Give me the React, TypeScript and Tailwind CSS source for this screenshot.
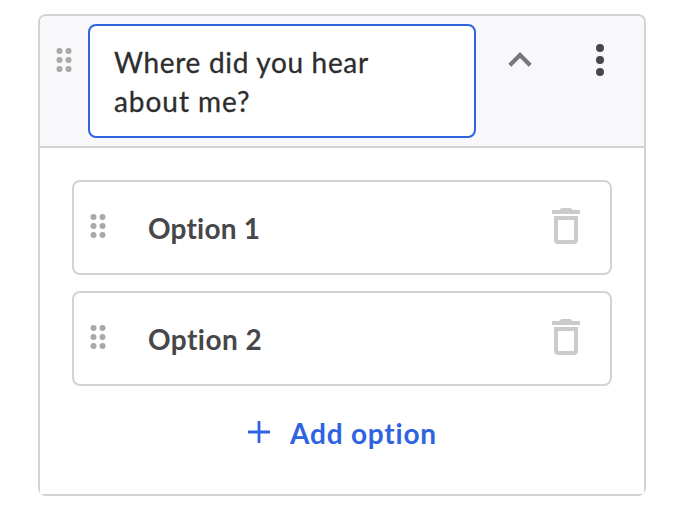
function DragHandle() {
  return (
    <svg width="16" height="24" viewBox="0 0 16 24" fill="#a9a9aa" className="block shrink-0">
      {[3, 12, 21].map((y) => (
        <g key={y}>
          <circle cx="3.5" cy={y} r="3" />
          <circle cx="12.5" cy={y} r="3" />
        </g>
      ))}
    </svg>
  );
}

function TrashIcon() {
  return (
    <svg width="28" height="36" viewBox="0 0 28 36" fill="#cbcbcb" className="block shrink-0">
      <path d="M0 2H7.2C8.5 .5 9.4 0 10.8 0H17.2C18.6 0 19.5 .5 20.8 2H28V6H0Z" />
      <path fillRule="evenodd" d="M2 8H26V32Q26 36 22 36H6Q2 36 2 32ZM6 12V32H22V12Z" />
    </svg>
  );
}

function OptionRow({ label, tracking }: { label: string; tracking: string }) {
  return (
    <div className="flex h-[95px] items-start rounded-lg border-2 border-[#d3d3d4] bg-white pl-4 pr-[30px]">
      <div className="pt-8">
        <DragHandle />
      </div>
      <span className={`ml-[42px] mt-[26px] grow whitespace-nowrap text-[28px] font-bold leading-10 text-[#474749] ${tracking}`}>
        {label}
      </span>
      <div className="pt-[26px]">
        <TrashIcon />
      </div>
    </div>
  );
}

export default function App() {
  return (
    <div className="h-[510px] w-[676px] bg-white pl-[38px] pt-[14px] font-['Lato',sans-serif]">
      <div className="flex h-[482px] w-[608px] flex-col rounded-lg border-2 border-[#d3d3d4]">
        <div className="flex h-[132px] shrink-0 items-start rounded-t-md border-b-2 border-[#d3d3d4] bg-[#f8f8fb] pl-4 pt-2">
          <div className="pt-6">
            <DragHandle />
          </div>
          <div className="ml-4 h-[114px] w-[388px] rounded-lg border-2 border-[#2f63e0] bg-white pl-6 pt-[17px] text-[28px] leading-[39px] text-[#2d2d2e] [-webkit-text-stroke:0.3px_#2d2d2e]">
            <div className="whitespace-nowrap tracking-[0.68px]">Where did you hear</div>
            <div className="whitespace-nowrap tracking-[0.95px]">about me?</div>
          </div>
          <svg width="24" height="16" viewBox="0 0 24 16" fill="none" stroke="#777779" strokeWidth="4.2" className="ml-8 mt-7 block shrink-0">
            <path d="M1.8 13.3L12 3L22.2 13.3" />
          </svg>
          <svg width="8" height="32" viewBox="0 0 8 32" fill="#474749" className="ml-16 mt-5 block shrink-0">
            <circle cx="4" cy="4" r="4" />
            <circle cx="4" cy="16" r="4" />
            <circle cx="4" cy="28" r="4" />
          </svg>
        </div>
        <div className="flex grow flex-col gap-4 bg-white px-8 pt-8">
          <OptionRow label="Option 1" tracking="tracking-[0.2px]" />
          <OptionRow label="Option 2" tracking="tracking-[0.45px]" />
          <button className="ml-44 mt-[11px] flex items-start whitespace-nowrap text-[28px] font-bold leading-10 text-[#2f63e0]">
            <svg width="22" height="22" viewBox="0 0 22 22" fill="none" stroke="currentColor" strokeWidth="2.8" className="mt-2 block">
              <path d="M11 0V22M0 11H22" />
            </svg>
            <span className="ml-5 tracking-[0.8px]">Add option</span>
          </button>
        </div>
      </div>
    </div>
  );
}
